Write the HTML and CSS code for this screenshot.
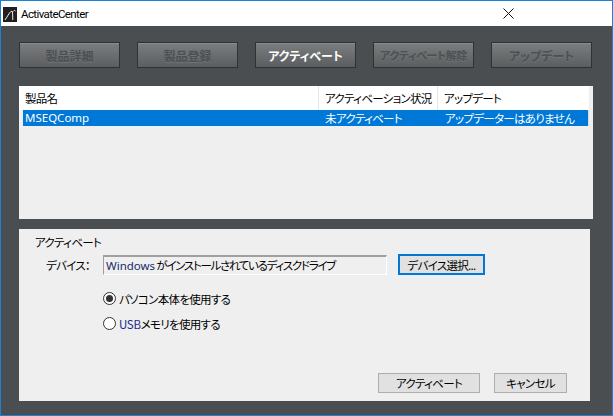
FILE: index.html
```html
<!DOCTYPE html>
<html lang="ja">
<head>
<meta charset="utf-8">
<title>ActivateCenter</title>
<link rel="stylesheet" href="styles.css">
</head>
<body>
<div class="window">
  <div class="titlebar">
    <svg class="app-icon" width="14" height="15" viewBox="0 0 14 15">
      <rect width="14" height="15" fill="#231f20"/>
      <path d="M2 13 L6.5 6 Q8 3.5 9.5 4.5 L9.8 13" fill="none" stroke="#fff" stroke-width="0.9"/>
      <path d="M10.5 4 Q11.5 3 12.5 4" fill="none" stroke="#fff" stroke-width="0.9"/>
    </svg>
    <span class="title">ActivateCenter</span>
    <svg class="close" width="11" height="11" viewBox="0 0 11 11">
      <path d="M0.5 0.5 L10.5 10.5 M10.5 0.5 L0.5 10.5" stroke="#111" stroke-width="1"/>
    </svg>
  </div>
  <div class="main">
    <div class="toolbar">
      <div class="tbtn disabled">製品詳細</div>
      <div class="tbtn disabled">製品登録</div>
      <div class="tbtn active">アクティベート</div>
      <div class="tbtn disabled narrow">アクティベート解除</div>
      <div class="tbtn disabled">アップデート</div>
    </div>
    <div class="list">
      <div class="list-inner">
        <div class="header">
          <div class="col c1">製品名</div>
          <div class="col c2">アクティベーション状況</div>
          <div class="col c3">アップデート</div>
        </div>
        <div class="row selected">
          <div class="col c1 latin-name">MSEQComp</div>
          <div class="col c2">未アクティベート</div>
          <div class="col c3">アップデーターはありません</div>
        </div>
      </div>
    </div>
    <div class="panel">
      <div class="group-label">アクティベート</div>
      <div class="device-row">
        <span class="device-label">デバイス：</span>
        <div class="field"><span class="latin">Windows</span> がインストールされているディスクドライブ</div>
        <div class="btn focused">デバイス選択...</div>
      </div>
      <div class="radios">
        <label class="radio"><span class="dot checked"></span>パソコン本体を使用する</label>
        <label class="radio"><span class="dot"></span><span class="usb">USB</span>メモリを使用する</label>
      </div>
      <div class="actions">
        <div class="btn act">アクティベート</div>
        <div class="btn cancel">キャンセル</div>
      </div>
    </div>
  </div>
</div>
</body>
</html>
```
FILE: styles.css
```css
* { box-sizing: border-box; }
html, body { margin: 0; padding: 0; background: #fff; }
body {
  font-family: "Noto Sans CJK JP", "Noto Sans", sans-serif;
  font-size: 11.5px;
  letter-spacing: -0.7px;
  font-feature-settings: "palt";
  color: #000;
}
.window {
  width: 613px;
  height: 416px;
  border: 1px solid #1883d7;
  display: flex;
  flex-direction: column;
}
.titlebar {
  height: 25px;
  background: #fff;
  display: flex;
  align-items: center;
  padding-left: 2px;
}
.app-icon { display: block; margin-top: 1px; }
.title {
  font-family: Roboto, "Noto Sans", sans-serif;
  font-size: 11.5px;
  letter-spacing: -0.6px;
  margin-left: 4px;
  color: #000;
}
.close { margin-left: auto; margin-right: 98px; }
.main {
  flex: 1;
  background: #4a4e50;
  padding: 16px 19px 0 18px;
  display: flex;
  flex-direction: column;
}
.toolbar {
  display: flex;
  gap: 17px;
  height: 26px;
}
.tbtn {
  width: 101px;
  height: 26px;
  border: 1px solid #2f3233;
  background: linear-gradient(#7b7d7f, #5b5e60);
  display: flex;
  align-items: center;
  justify-content: center;
  font-weight: bold;
  font-size: 12px;
  letter-spacing: 0;
  white-space: nowrap;
  box-shadow: inset 0 1px 0 #8a8c8e;
}
.tbtn.disabled { color: #4c5052; text-shadow: 0 1px 0 #707375; }
.tbtn.active { color: #fff; }
.tbtn.narrow { font-size: 11px; letter-spacing: -0.4px; }
.list {
  margin-top: 18px;
  height: 133px;
  background: #efefef;
  padding-left: 4px;
  padding-right: 4px;
}
.list-inner {
  width: 566px;
  border-right: 1px solid #dadada;
  height: 40px;
}
.header {
  display: flex;
  height: 24px;
  background: #fff;
  margin-left: -4px;
  width: 570px;
  align-items: center;
  white-space: nowrap;
}
.header .c1 { width: 300px; padding-left: 6px; border-right: 1px solid #e5e5e5; height: 24px; line-height: 24px; }
.header .c2 { width: 119px; padding-left: 6px; border-right: 1px solid #e5e5e5; height: 24px; line-height: 24px; }
.header .c3 { flex: 1; padding-left: 6px; height: 24px; line-height: 24px; }
.row {
  display: flex;
  height: 16px;
  line-height: 16px;
  white-space: nowrap;
}
.row.selected { background: #0078d7; color: #fff; }
.row .c1 { width: 296px; padding-left: 2px; }
.row .latin-name { font-family: "Noto Sans", sans-serif; letter-spacing: 0; font-size: 11.5px; }
.row .c2 { width: 119px; padding-left: 6px; }
.row .c3 { flex: 1; padding-left: 7px; }
.panel {
  margin-top: 10px;
  height: 172px;
  margin-right: 3px;
  background: #efefef;
  display: flex;
  flex-direction: column;
  padding-left: 16px;
  white-space: nowrap;
}
.group-label { margin-top: 5px; height: 17px; line-height: 17px; }
.device-row {
  display: flex;
  align-items: center;
  margin-top: 3px;
  height: 21px;
}
.device-label { width: 68px; padding-left: 11px; }
.field {
  width: 284px;
  height: 20px;
  line-height: 17px;
  padding-left: 2px;
  border-top: 2px solid #a0a0a0;
  border-left: 1px solid #a0a0a0;
  border-right: 1px solid #fff;
  border-bottom: 1px solid #fff;
  background: #efefef;
  letter-spacing: -1.3px;
  overflow: hidden;
}
.latin { color: #1a2a6a; letter-spacing: 0; font-family: "Noto Sans", sans-serif; }
.btn {
  display: flex;
  align-items: center;
  justify-content: center;
  background: #e1e1e1;
  border: 1px solid #adadad;
  height: 21px;
}
.btn.focused {
  margin-left: 11px;
  width: 87px;
  border: 2px solid #0078d7;
}
.radios {
  margin-top: 15px;
  margin-left: 68px;
  display: flex;
  flex-direction: column;
  gap: 8px;
}
.radio { display: flex; align-items: center; height: 17px; }
.dot {
  width: 13px;
  height: 13px;
  border: 1px solid #333;
  border-radius: 50%;
  background: #fff;
  margin-right: 3px;
  display: flex;
  align-items: center;
  justify-content: center;
}
.dot.checked::after {
  content: "";
  width: 7px;
  height: 7px;
  border-radius: 50%;
  background: #333;
}
.usb { color: #1a2a8a; letter-spacing: -0.3px; }
.actions {
  margin-top: auto;
  margin-bottom: 8px;
  display: flex;
  justify-content: flex-end;
  gap: 14px;
  padding-right: 23px;
}
.btn.act { width: 102px; height: 20px; }
.btn.cancel { width: 73px; height: 20px; }
```
